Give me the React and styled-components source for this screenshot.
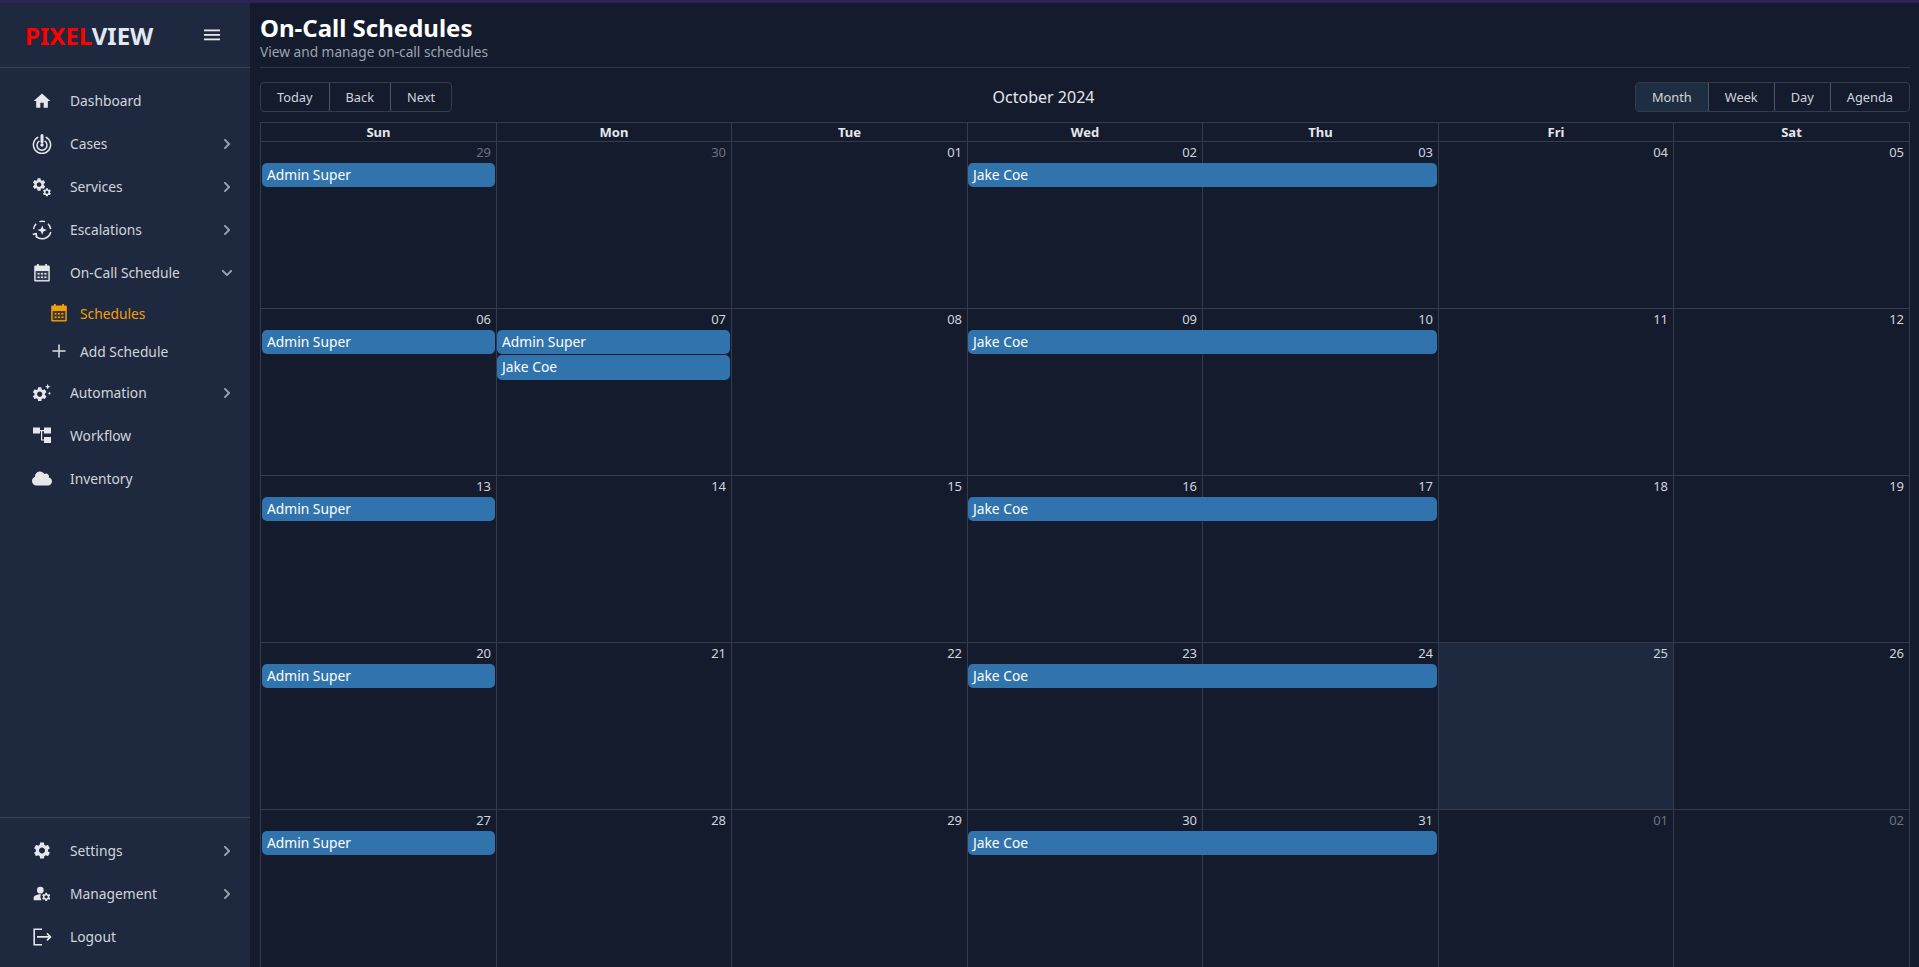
import React from "react";
import styled, { createGlobalStyle } from "styled-components";
import { MdHome, MdSettings, MdManageAccounts } from "react-icons/md";
import { FaChevronRight, FaChevronDown, FaCloud } from "react-icons/fa";

const GEAR =
  "M19.14 12.94c.04-.3.06-.61.06-.94 0-.32-.02-.64-.07-.94l2.03-1.58a.49.49 0 0 0 .12-.61l-1.92-3.32a.488.488 0 0 0-.59-.22l-2.39.96c-.5-.38-1.03-.7-1.62-.94l-.36-2.54a.484.484 0 0 0-.48-.41h-3.84c-.24 0-.43.17-.47.41l-.36 2.54c-.59.24-1.13.57-1.62.94l-2.39-.96c-.22-.08-.47 0-.59.22L2.74 8.87c-.12.21-.08.47.12.61l2.03 1.58c-.05.3-.09.63-.09.94s.02.64.07.94l-2.03 1.58a.49.49 0 0 0-.12.61l1.92 3.32c.12.22.37.29.59.22l2.39-.96c.5.38 1.03.7 1.62.94l.36 2.54c.05.24.24.41.48.41h3.84c.24 0 .44-.17.47-.41l.36-2.54c.59-.24 1.13-.56 1.62-.94l2.39.96c.22.08.47 0 .59-.22l1.92-3.32c.12-.22.07-.47-.12-.61l-2.01-1.58zM12 15.6c-1.98 0-3.6-1.62-3.6-3.6s1.62-3.6 3.6-3.6 3.6 1.62 3.6 3.6-1.62 3.6-3.6 3.6z";

// the columns of the reference snap to whole pixels, not to equal fractions
const COLUMNS = "235px 235px 236px 235px 236px 235px minmax(0, 1fr)";

const CasesIcon = () => (
  <svg width="20" height="20" viewBox="0 0 20 20" fill="none" stroke="currentColor">
    <path d="M6.3 3.1a8.6 8.6 0 1 0 7.4 0" strokeWidth="1.5" />
    <path d="M7.4 6.9a5 5 0 1 0 5.2 0" strokeWidth="1.5" />
    <rect x="8.5" y="0" width="3" height="9.5" rx="1.5" fill="currentColor" stroke="none" />
    <circle cx="10" cy="11" r="1.7" fill="currentColor" stroke="none" />
  </svg>
);

const ServicesIcon = () => (
  <svg width="20" height="20" viewBox="0 0 20 20" fill="currentColor">
    <path d={GEAR} transform="translate(-.75 -.3) scale(.65)" />
    <path d={GEAR} transform="translate(9.9 10.2) scale(.42)" />
  </svg>
);

const EscalationsIcon = () => (
  <svg width="20" height="20" viewBox="0 0 20 20" fill="none" stroke="currentColor" strokeWidth="1.5">
    <path d="M1.6 9.2A8.8 8.8 0 0 1 4.2 3.8M7.4 1.6a9 9 0 0 1 5.6 0M16 3.8a8.8 8.8 0 0 1 2.7 5.4" />
    <path d="M18.8 12a9 9 0 0 1-15 4.2" />
    <path d="M.8 14.4l3.4-.6.5 3.8" strokeWidth="1.6" />
    <path d="M10.2 5.4l1.3 3.4 3.4 1.3-3.4 1.3-1.3 3.4-1.3-3.4-3.4-1.3 3.4-1.3z" fill="currentColor" stroke="none" />
  </svg>
);

const AutomationIcon = () => (
  <svg width="20" height="20" viewBox="0 0 20 20" fill="currentColor">
    <path d={GEAR} transform="translate(-.94 2.56) scale(.72)" />
    <path d="M15.7 .8l.8 2.1 2.1.8-2.1.8-.8 2.1-.8-2.1-2.1-.8 2.1-.8zM17.4 8.4l.5 1.4 1.4.5-1.4.5-.5 1.4-.5-1.4-1.4-.5 1.4-.5z" />
  </svg>
);

const WorkflowIcon = () => (
  <svg width="20" height="20" viewBox="0 0 20 20" fill="currentColor">
    <rect x="1" y="1.5" width="7" height="6" />
    <rect x="12" y="1.5" width="7" height="6" />
    <rect x="12" y="11" width="7" height="6" />
    <path d="M8 4H12v1.2H10.2v8.2H12v1.2H9V5.2H8z" />
  </svg>
);

const CalendarIcon = ({ $inner }) => (
  <svg width="20" height="20" viewBox="0 0 20 20" fill="currentColor">
    <rect x="5" y="1" width="1.8" height="3.5" />
    <rect x="13.2" y="1" width="1.8" height="3.5" />
    <rect x="2.2" y="2.6" width="15.6" height="15.9" rx="1.2" />
    <rect x="3.6" y="8" width="12.8" height="9.1" fill={$inner} />
    <path d="M5.6 10h2v1.6h-2zM9 10h2v1.6H9zM12.4 10h2v1.6h-2zM5.6 13.4h2V15h-2zM9 13.4h2V15H9zM12.4 13.4h2V15h-2z" />
  </svg>
);

const PlusIcon = () => (
  <svg width="20" height="20" viewBox="0 0 20 20" fill="currentColor">
    <rect x="3.5" y="9.2" width="13" height="1.6" />
    <rect x="9.2" y="3.5" width="1.6" height="13" />
  </svg>
);

const LogoutIcon = () => (
  <svg width="20" height="20" viewBox="0 0 20 20" fill="none" stroke="currentColor" strokeWidth="1.6">
    <path d="M10 2.2H2.2v15.6H10" />
    <path d="M5 9.9h13.5M15 6.4l3.5 3.5-3.5 3.5" />
  </svg>
);

const MenuIcon = () => (
  <svg width="16" height="12" viewBox="0 0 16 12" fill="currentColor">
    <rect y="0.5" width="16" height="1.8" />
    <rect y="5" width="16" height="1.8" />
    <rect y="9.5" width="16" height="1.8" />
  </svg>
);

const topNav = [
  { label: "Dashboard", icon: <MdHome size={20} /> },
  { label: "Cases", icon: <CasesIcon />, arrow: "right" },
  { label: "Services", icon: <ServicesIcon />, arrow: "right" },
  { label: "Escalations", icon: <EscalationsIcon />, arrow: "right" },
  {
    label: "On-Call Schedule",
    icon: <CalendarIcon $inner="#374357" />,
    arrow: "down",
    children: [
      { label: "Schedules", icon: <CalendarIcon $inner="#3f3a2c" />, active: true },
      { label: "Add Schedule", icon: <PlusIcon /> },
    ],
  },
  { label: "Automation", icon: <AutomationIcon />, arrow: "right" },
  { label: "Workflow", icon: <WorkflowIcon /> },
  { label: "Inventory", icon: <FaCloud size={21} /> },
];

const bottomNav = [
  { label: "Settings", icon: <MdSettings size={21} />, arrow: "right" },
  { label: "Management", icon: <MdManageAccounts size={21} />, arrow: "right" },
  { label: "Logout", icon: <LogoutIcon /> },
];

const dayNames = ["Sun", "Mon", "Tue", "Wed", "Thu", "Fri", "Sat"];

const weeks = [
  {
    dates: [["29", true], ["30", true], ["01"], ["02"], ["03"], ["04"], ["05"]],
    events: [
      { name: "Admin Super", start: 1, span: 1, row: 2 },
      { name: "Jake Coe", start: 4, span: 2, row: 2 },
    ],
  },
  {
    dates: [["06"], ["07"], ["08"], ["09"], ["10"], ["11"], ["12"]],
    events: [
      { name: "Admin Super", start: 1, span: 1, row: 2 },
      { name: "Admin Super", start: 2, span: 1, row: 2 },
      { name: "Jake Coe", start: 2, span: 1, row: 3 },
      { name: "Jake Coe", start: 4, span: 2, row: 2 },
    ],
  },
  {
    dates: [["13"], ["14"], ["15"], ["16"], ["17"], ["18"], ["19"]],
    events: [
      { name: "Admin Super", start: 1, span: 1, row: 2 },
      { name: "Jake Coe", start: 4, span: 2, row: 2 },
    ],
  },
  {
    dates: [["20"], ["21"], ["22"], ["23"], ["24"], ["25", false, true], ["26"]],
    events: [
      { name: "Admin Super", start: 1, span: 1, row: 2 },
      { name: "Jake Coe", start: 4, span: 2, row: 2 },
    ],
  },
  {
    dates: [["27"], ["28"], ["29"], ["30"], ["31"], ["01", true], ["02", true]],
    events: [
      { name: "Admin Super", start: 1, span: 1, row: 2 },
      { name: "Jake Coe", start: 4, span: 2, row: 2 },
    ],
  },
];

const NavEntry = ({ item }) => (
  <>
    <NavItem>
      <NavIcon>{item.icon}</NavIcon>
      <NavLabel>{item.label}</NavLabel>
      {item.arrow === "right" && <Arrow><FaChevronRight size={12} /></Arrow>}
      {item.arrow === "down" && <Arrow><FaChevronDown size={12} /></Arrow>}
    </NavItem>
    {item.children && (
      <SubList>
        {item.children.map((child) => (
          <SubItem key={child.label} $active={child.active}>
            <SubIcon>{child.icon}</SubIcon>
            {child.label}
          </SubItem>
        ))}
      </SubList>
    )}
  </>
);

const App = () => {
  return (
    <Page>
      <GlobalStyle />
      <TopStrip />
      <Body>
        <Sidebar>
          <Brand>
            <Logo>
              <LogoRed>PIXEL</LogoRed>VIEW
            </Logo>
            <MenuButton><MenuIcon /></MenuButton>
          </Brand>
          <NavList>
            {topNav.map((item) => (
              <NavEntry key={item.label} item={item} />
            ))}
          </NavList>
          <BottomNav>
            {bottomNav.map((item) => (
              <NavEntry key={item.label} item={item} />
            ))}
          </BottomNav>
        </Sidebar>
        <Main>
          <PageHeader>
            <Title>On-Call Schedules</Title>
            <Subtitle>View and manage on-call schedules</Subtitle>
          </PageHeader>
          <Toolbar>
            <ButtonGroup>
              <ToolButton>Today</ToolButton>
              <ToolButton>Back</ToolButton>
              <ToolButton>Next</ToolButton>
            </ButtonGroup>
            <MonthLabel>October 2024</MonthLabel>
            <ButtonGroup>
              <ToolButton $active>Month</ToolButton>
              <ToolButton>Week</ToolButton>
              <ToolButton>Day</ToolButton>
              <ToolButton>Agenda</ToolButton>
            </ButtonGroup>
          </Toolbar>
          <Calendar>
            <DayHeader>
              {dayNames.map((day) => (
                <DayName key={day}>{day}</DayName>
              ))}
            </DayHeader>
            {weeks.map((week) => (
              <Week key={week.dates[0][0] + week.dates[6][0]}>
                {week.dates.map(([date, off, today], i) => (
                  <DayCell key={date} $col={i + 1} $today={today} />
                ))}
                {week.dates.map(([date, off], i) => (
                  <DateNum key={date} $col={i + 1} $off={off}>{date}</DateNum>
                ))}
                {week.events.map((ev) => (
                  <Event key={ev.name + ev.start} $start={ev.start} $span={ev.span} $row={ev.row}>
                    {ev.name}
                  </Event>
                ))}
              </Week>
            ))}
          </Calendar>
        </Main>
      </Body>
    </Page>
  );
};

export default App;

const GlobalStyle = createGlobalStyle`
  html, body {
    margin: 0;
    height: 100%;
    overflow: hidden;
    background: #141b2d;
  }
  * {
    box-sizing: border-box;
  }
  body {
    font-family: "Noto Sans", "Open Sans", sans-serif;
  }
`;
const Page = styled.div`
  height: 100vh;
  display: flex;
  flex-direction: column;
  overflow: hidden;
`;
const TopStrip = styled.div`
  height: 3px;
  flex: none;
  background: #2e2258;
`;
const Body = styled.div`
  flex: 1;
  min-height: 0;
  display: flex;
`;
const Sidebar = styled.aside`
  width: 250px;
  flex: none;
  background: #1e293f;
  display: flex;
  flex-direction: column;
`;
const Brand = styled.div`
  height: 65px;
  flex: none;
  border-bottom: 1px solid #374151;
  padding: 0 30px 0 25px;
  display: flex;
  align-items: center;
  justify-content: space-between;
`;
const Logo = styled.div`
  font-size: 24px;
  font-weight: 700;
  color: #e2e8f0;
`;
const LogoRed = styled.span`
  color: #ff0000;
`;
const MenuButton = styled.div`
  display: flex;
  color: #e5e7eb;
`;
const NavList = styled.nav`
  flex: 1;
  padding-top: 11px;
`;
const BottomNav = styled.nav`
  border-top: 1px solid #374151;
  padding: 11px 0 9px;
`;
const NavItem = styled.div`
  height: 43px;
  padding: 0 17px 0 32px;
  display: flex;
  align-items: center;
  color: #d1d5db;
  font-size: 13.8px;
`;
const NavIcon = styled.span`
  width: 20px;
  height: 20px;
  flex: none;
  margin-right: 18px;
  display: flex;
  align-items: center;
  justify-content: center;
  color: #e5e7eb;
`;
const NavLabel = styled.span`
  flex: 1;
`;
const Arrow = styled.span`
  display: flex;
  color: #9ca3af;
`;
const SubList = styled.div`
  padding-bottom: 1px;
`;
const SubItem = styled.div`
  height: 38px;
  padding-left: 49px;
  display: flex;
  align-items: center;
  font-size: 13.8px;
  color: ${(props) => (props.$active ? "#f59e0b" : "#d1d5db")};
`;
const SubIcon = styled.span`
  width: 20px;
  height: 20px;
  flex: none;
  margin-right: 11px;
  display: flex;
`;
const Main = styled.main`
  flex: 1;
  min-width: 0;
  padding: 0 9px 0 10px;
`;
const PageHeader = styled.header`
  height: 65px;
  border-bottom: 1px solid #2f3747;
  padding-top: 9px;
`;
const Title = styled.h1`
  margin: 0;
  font-size: 24px;
  line-height: 32px;
  font-weight: 700;
  color: #fff;
`;
const Subtitle = styled.p`
  margin: 0;
  font-size: 13.7px;
  line-height: 16px;
  color: #9ca3af;
`;
const Toolbar = styled.div`
  margin-top: 14px;
  height: 30px;
  display: flex;
  align-items: center;
  justify-content: space-between;
`;
const ButtonGroup = styled.div`
  display: flex;
  height: 30px;
  border: 1px solid #333b4d;
  border-radius: 4px;
  overflow: hidden;
`;
const ToolButton = styled.button`
  font: inherit;
  font-size: 12.8px;
  padding: 0 16px;
  color: #d1d5db;
  background: ${(props) => (props.$active ? "#1f2d42" : "transparent")};
  border: 0;
  border-left: 1px solid #4b5563;

  &:first-child {
    border-left: 0;
  }
`;
const MonthLabel = styled.div`
  flex: 1;
  text-align: center;
  font-size: 16px;
  color: #e5e7eb;
`;
const Calendar = styled.section`
  margin-top: 10px;
  border: 1px solid #333b4d;
  border-bottom: 0;
`;
const DayHeader = styled.div`
  display: grid;
  grid-template-columns: ${COLUMNS};
  height: 19px;
  border-bottom: 1px solid #333b4d;
`;
const DayName = styled.div`
  font-size: 13px;
  line-height: 18px;
  font-weight: 700;
  text-align: center;
  color: #e5e7eb;
  border-left: 1px solid #333b4d;

  &:first-child {
    border-left: 0;
  }
`;
const Week = styled.div`
  display: grid;
  grid-template-columns: ${COLUMNS};
  grid-template-rows: 21px 25px 25px 1fr;
  height: 167px;
  border-bottom: 1px solid #333b4d;
`;
const DayCell = styled.div`
  grid-column: ${(props) => props.$col};
  grid-row: 1 / -1;
  border-left: ${(props) => (props.$col === 1 ? "0" : "1px solid #333b4d")};
  background: ${(props) => (props.$today ? "#1e293f" : "transparent")};
`;
const DateNum = styled.div`
  grid-column: ${(props) => props.$col};
  grid-row: 1;
  z-index: 1;
  font-size: 13px;
  line-height: 20px;
  text-align: right;
  padding-right: 5px;
  color: ${(props) => (props.$off ? "#6b7280" : "#d1d5db")};
`;
const Event = styled.div`
  grid-column: ${(props) => props.$start} / span ${(props) => props.$span};
  grid-row: ${(props) => props.$row};
  z-index: 1;
  margin: 0 1px ${(props) => (props.$row === 2 ? "1px" : "0")};
  padding: 0 5px;
  border-radius: 5px;
  background: #3174ad;
  color: #fff;
  font-size: 13.8px;
  line-height: 23px;
`;
